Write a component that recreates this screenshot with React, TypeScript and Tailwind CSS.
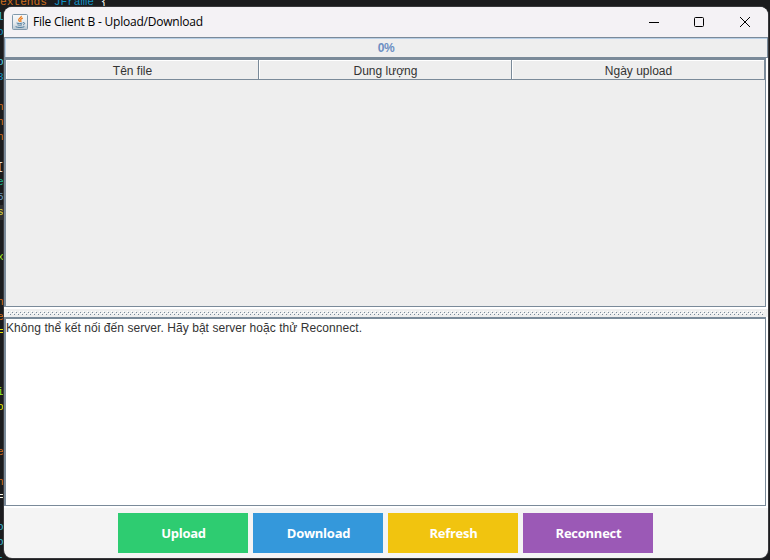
const codeRows: [string, string][] = [
  ['l', 'text-[#39b5d0]'],
  ['o', 'text-[#1290c3]'],
  ['', ''],
  ['o', 'text-[#4fd0e8]'],
  ['3', 'text-[#1290c3]'],
  ['', ''],
  ['n', 'text-[#cc6c1d]'],
  ['n', 'text-[#cc6c1d]'],
  ['n', 'text-[#cc6c1d]'],
  ['', ''],
  ['[', 'text-[#f9faf4]'],
  ['e', 'text-[#1eb590]'],
  ['5', 'text-[#6897bb]'],
  ['s', 'text-[#d8d43c] bg-[#303132]'],
  ['', ''],
  ['', ''],
  ['x', 'text-[#96ec1f]'],
  ['', ''],
  ['', ''],
  ['n', 'text-[#cc6c1d]'],
  ['e', 'text-[#cc6c1d]'],
  ['=', 'text-[#e6e600]'],
  ['', ''],
  ['', ''],
  ['', ''],
  ['i', 'text-[#96ec1f]'],
  ['o', 'text-[#e6e600]'],
  ['', ''],
  ['', ''],
  ['e', 'text-[#cc6c1d]'],
  ['', ''],
  ['n', 'text-[#cc6c1d]'],
  ['=', 'text-[#f9faf4]'],
  ['', ''],
  ['o', 'text-[#39b5d0]'],
  ['o', 'text-[#39b5d0]'],
  ['-', 'text-[#39b5d0]'],
];

const buttons = [
  { label: 'Upload', bg: 'bg-[#2ecc71]' },
  { label: 'Download', bg: 'bg-[#3498db]' },
  { label: 'Refresh', bg: 'bg-[#f1c40f]' },
  { label: 'Reconnect', bg: 'bg-[#9b59b6]' },
];

function JavaIcon() {
  return (
    <svg width="16" height="16" viewBox="0 0 16 16" className="shrink-0">
      <defs>
        <linearGradient id="tile" x1="0" y1="0" x2="0" y2="1">
          <stop offset="0" stopColor="#f8f9fa" />
          <stop offset="0.6" stopColor="#e4e9ed" />
          <stop offset="1" stopColor="#b4c3cf" />
        </linearGradient>
      </defs>
      <rect x="0.5" y="0.5" width="15" height="15" rx="1" fill="url(#tile)" stroke="#8098ab" />
      <path d="M9.300 1.800c.5 1.900-3.100 2.500-2.600 4.300.2.700.9 1.100 1.100 1.700M10.800 4.200c-1.500.5-2.700 1.300-2 2.200.5.600.3 1-.2 1.500" fill="none" stroke="#ee7d1e" strokeWidth="1.300" />
      <path d="M4.600 9c1.500.6 4.400.6 5.900 0M5.500 10.800c1.400.5 3.100.5 4.500 0M3.600 12.700c2.200 1 6.400 1 8.800 0M11 8.700c2.200-.4 2.200 1.500.2 2.100" fill="none" stroke="#47779a" strokeWidth="1" />
    </svg>
  );
}

function TitleBar() {
  return (
    <div className="flex h-[30px] shrink-0 items-center bg-[#f4f2f5] pl-2">
      <JavaIcon />
      <span className="ml-[5px] whitespace-nowrap font-['Open_Sans','Noto_Sans',sans-serif] text-[12px] tracking-[-0.22px] text-black">
        File Client B - Upload/Download
      </span>
      <div className="ml-auto mr-[17px] flex text-black">
        <svg className="mr-[33px]" width="12" height="12" viewBox="0 0 12 12"><path d="M1 6.500h10" stroke="currentColor" /></svg>
        <svg className="mr-[34px]" width="12" height="12" viewBox="0 0 12 12"><rect x="1.500" y="1.500" width="9" height="9" rx="1" fill="none" stroke="currentColor" /></svg>
        <svg width="12" height="12" viewBox="0 0 12 12"><path d="M1 1l10 10M11 1L1 11" stroke="currentColor" strokeWidth="1" /></svg>
      </div>
    </div>
  );
}

function HeaderCell({ text, width }: { text: string; width: string }) {
  return (
    <div className={`${width} flex h-5 items-center justify-center border-b border-r border-b-[#7a8a99] border-r-[#7a8a99] bg-[#eeeeee] pl-px pt-[3px] shadow-[inset_1px_1px_0_white]`}>
      <span>{text}</span>
    </div>
  );
}

function Bumps() {
  return (
    <svg className="block h-2 w-full shrink-0 bg-[#eeeeee]" shapeRendering="crispEdges">
      <defs>
        <pattern id="bumps" x="3" y="2" width="4" height="4" patternUnits="userSpaceOnUse">
          <rect x="0" y="0" width="1" height="1" fill="white" />
          <rect x="1" y="1" width="1" height="1" fill="#7a8a99" />
          <rect x="2" y="2" width="1" height="1" fill="white" />
          <rect x="3" y="3" width="1" height="1" fill="#7a8a99" />
        </pattern>
      </defs>
      <rect x="3" y="2" width="757" height="4" fill="url(#bumps)" />
    </svg>
  );
}

export default function App() {
  return (
    <div className="relative h-[560px] w-[770px] overflow-hidden bg-[#1b1c1e] font-['Liberation_Sans',Arial,sans-serif] text-[12px] text-[#333333]">
      <div className="font-['Liberation_Mono',monospace] text-[11.2px] leading-[15px]">
        <div className="-mt-[5px] h-[15px] whitespace-pre text-[#cc6c1d]">
          extends <span className="text-[#1290c3]">JFrame</span> <span className="text-[#f9faf4]">{'{'}</span>
        </div>
        {codeRows.map(([glyph, tone], i) => (
          <div key={i} className={`h-[15px] w-[7px] ${tone}`}>
            <span className="-ml-[3px]">{glyph}</span>
          </div>
        ))}
      </div>

      <div className="absolute left-[4px] top-[7px] flex h-[551px] w-[764px] flex-col overflow-hidden rounded-[8px] bg-[#f4f4f4] shadow-[0_0_0_1px_#38383b]">
        <TitleBar />
        <div className="flex h-[21px] shrink-0 items-center justify-center border border-[#7a8a99] bg-[#eeeeee] text-[12px] font-bold tracking-[-0.5px] text-[#6c8fc3] shadow-[inset_1px_1px_0_#b8cfe5]">
          0%
        </div>

        <div className="flex h-[251px] shrink-0 bg-white pb-[2px] pr-[2px]">
          <div className="flex w-[762px] flex-col border-b border-l-2 border-r border-t-2 border-[#7a8a99] bg-[#eeeeee]">
            <div className="flex h-5 shrink-0">
              <HeaderCell text="Tên file" width="w-[253px]" />
              <HeaderCell text="Dung lượng" width="w-[253px]" />
              <HeaderCell text="Ngày upload" width="w-[253px]" />
            </div>
          </div>
        </div>

        <Bumps />

        <div className="flex h-[191px] shrink-0 bg-white pb-[2px] pr-[2px]">
          <div className="w-[762px] border-b border-l-2 border-r border-t-2 border-[#7a8a99] bg-white leading-[15px]">
            <div className="mt-[2px] whitespace-nowrap tracking-[0.06px]">Không thể kết nối đến server. Hãy bật server hoặc thử Reconnect.</div>
          </div>
        </div>

        <div className="flex justify-center gap-[5px] pr-px pt-[5px]">
          {buttons.map((b) => (
            <button
              key={b.label}
              className={`h-10 w-[130px] ${b.bg} pl-px pt-px font-['Open_Sans','Noto_Sans',sans-serif] text-[13px] font-bold tracking-[-0.25px] text-white`}
            >
              {b.label}
            </button>
          ))}
        </div>
      </div>
    </div>
  );
}
